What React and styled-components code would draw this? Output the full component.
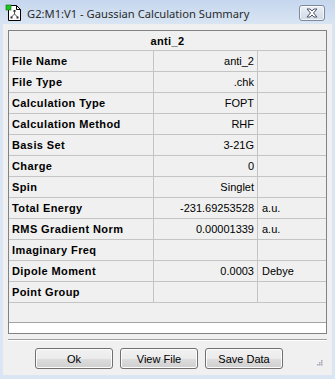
import React from "react";
import styled, { createGlobalStyle } from "styled-components";

const GlobalStyle = createGlobalStyle`
  html, body {
    margin: 0;
    padding: 0;
    background: #dae6f4;
  }
`;

const Window = styled.div`
  width: 335px;
  height: 379px;
  box-sizing: border-box;
  background: linear-gradient(#c5d6ed, #d9e5f3 24px, #dae6f4);
  display: flex;
  flex-direction: column;
  padding: 0 3px 4px 3px;
  font-family: "Liberation Sans", Arial, sans-serif;
`;

const TitleBar = styled.div`
  height: 24px;
  display: flex;
  align-items: center;
  padding: 0 7px 0 2px;
`;

const TitleText = styled.span`
  flex: 1;
  margin-left: 5px;
  font-family: "Noto Sans", "Open Sans", sans-serif;
  font-size: 11.2px;
  color: #2b2b2b;
  padding-top: 2px;
`;

const CloseButton = styled.div`
  width: 26px;
  height: 16px;
  box-sizing: border-box;
  border: 1px solid #7c8aa0;
  border-radius: 3px;
  background: linear-gradient(#eef2f7, #dde4ee 50%, #d2dae6);
  box-shadow: inset 0 0 0 1px rgba(255, 255, 255, 0.7);
  display: flex;
  align-items: center;
  justify-content: center;
  margin-top: 2px;
`;

const Client = styled.div`
  flex: 1;
  background: #f0f0f0;
  display: flex;
  flex-direction: column;
  padding: 6px 5px 0 5px;
  position: relative;
`;

const Table = styled.div`
  border: 1px solid #828282;
  display: grid;
  grid-template-columns: 145px 104px 68px;
  background: #f0f0f0;
`;

const HeaderCell = styled.div`
  grid-column: 1 / -1;
  height: 20px;
  box-sizing: border-box;
  border-bottom: 1px solid #c4c4c4;
  display: flex;
  align-items: center;
  justify-content: center;
  font-size: 11px;
  font-weight: bold;
  letter-spacing: 0.4px;
  color: #000;
`;

const Cell = styled.div`
  height: 21px;
  box-sizing: border-box;
  border-bottom: 1px solid #c4c4c4;
  border-right: ${(p) => (p.$last ? "none" : "1px solid #c4c4c4")};
  display: flex;
  align-items: center;
  justify-content: ${(p) => (p.$align === "right" ? "flex-end" : "flex-start")};
  padding: ${(p) =>
    p.$align === "right" ? "0 3px 0 0" : p.$unit ? "0 0 0 4px" : "0 0 0 3px"};
  font-size: 11px;
  font-weight: ${(p) => (p.$bold ? "bold" : "normal")};
  letter-spacing: ${(p) => (p.$bold ? "0.4px" : "0")};
  color: #000;
  white-space: nowrap;
`;

const EmptyArea = styled.div`
  grid-column: 1 / -1;
  height: 20px;
  box-sizing: border-box;
  border-bottom: 1px solid #a3a3a3;
`;

const WhiteStrip = styled.div`
  grid-column: 1 / -1;
  height: 10px;
  background: #ffffff;
`;

const Separator = styled.div`
  margin-top: 5px;
  height: 1px;
  background: #a0a0a0;
  border-bottom: 1px solid #ffffff;
`;

const ButtonRow = styled.div`
  display: flex;
  gap: 7px;
  padding-left: 27px;
  margin-top: 7px;
`;

const Button = styled.div`
  width: 78px;
  height: 21px;
  box-sizing: border-box;
  border: 1px solid #707070;
  border-radius: 3px;
  background: linear-gradient(#f2f2f2, #ebebeb 50%, #dddddd 51%, #cfcfcf);
  box-shadow: inset 0 0 0 1px #fcfcfc;
  display: flex;
  align-items: center;
  justify-content: center;
  font-size: 11px;
  color: #000;
`;

const Grip = styled.svg`
  position: absolute;
  right: 9px;
  bottom: 8px;
`;

const rows = [
  ["File Name", "anti_2", ""],
  ["File Type", ".chk", ""],
  ["Calculation Type", "FOPT", ""],
  ["Calculation Method", "RHF", ""],
  ["Basis Set", "3-21G", ""],
  ["Charge", "0", ""],
  ["Spin", "Singlet", ""],
  ["Total Energy", "-231.69253528", "a.u."],
  ["RMS Gradient Norm", "0.00001339", "a.u."],
  ["Imaginary Freq", "", ""],
  ["Dipole Moment", "0.0003", "Debye"],
  ["Point Group", "", ""],
];

function AppIcon() {
  return (
    <svg width="17" height="17" viewBox="0 0 17 17">
      <path d="M3.5 1.5 H11.5 L15.5 5.5 V16.5 H3.5 Z" fill="#fff" stroke="#000" />
      <path d="M11.5 1.5 V5.5 H15.5" fill="none" stroke="#000" />
      <rect x="1" y="1" width="5" height="5" fill="#1fc51f" stroke="#0a6a0a" strokeWidth="0.6" />
      <path d="M9.5 7 V10 M9.5 10 L6.5 13 M9.5 10 L12.5 13" stroke="#555" strokeWidth="1" fill="none" />
      <rect x="8.5" y="6" width="2" height="2" fill="#333" />
      <rect x="5.5" y="12.5" width="2" height="2" fill="#333" />
      <rect x="11.5" y="12.5" width="2" height="2" fill="#333" />
    </svg>
  );
}

function CloseGlyph() {
  return (
    <svg width="14" height="10" viewBox="0 0 14 10">
      <path
        d="M2 1 H5 L7 3 L9 1 H12 L8.5 5 L12 9 H9 L7 7 L5 9 H2 L5.5 5 Z"
        fill="#fff"
        stroke="#4a5566"
        strokeWidth="1"
        strokeLinejoin="round"
      />
    </svg>
  );
}

export default function App() {
  return (
    <>
      <GlobalStyle />
      <Window>
        <TitleBar>
          <AppIcon />
          <TitleText>G2:M1:V1 - Gaussian Calculation Summary</TitleText>
          <CloseButton>
            <CloseGlyph />
          </CloseButton>
        </TitleBar>
        <Client>
          <Table>
            <HeaderCell>anti_2</HeaderCell>
            {rows.map(([label, value, unit]) => (
              <React.Fragment key={label}>
                <Cell $bold>{label}</Cell>
                <Cell $align="right">{value}</Cell>
                <Cell $unit $last>
                  {unit}
                </Cell>
              </React.Fragment>
            ))}
            <EmptyArea />
            <WhiteStrip />
          </Table>
          <Separator />
          <ButtonRow>
            <Button>Ok</Button>
            <Button>View File</Button>
            <Button>Save Data</Button>
          </ButtonRow>
          <Grip width="7" height="7" viewBox="0 0 7 7">
            {[
              [5, 0],
              [3, 2],
              [5, 2],
              [1, 4],
              [3, 4],
              [5, 4],
            ].map(([x, y]) => (
              <rect key={`${x}-${y}`} x={x} y={y} width="1.5" height="1.5" fill="#a0a8b4" />
            ))}
          </Grip>
        </Client>
      </Window>
    </>
  );
}
